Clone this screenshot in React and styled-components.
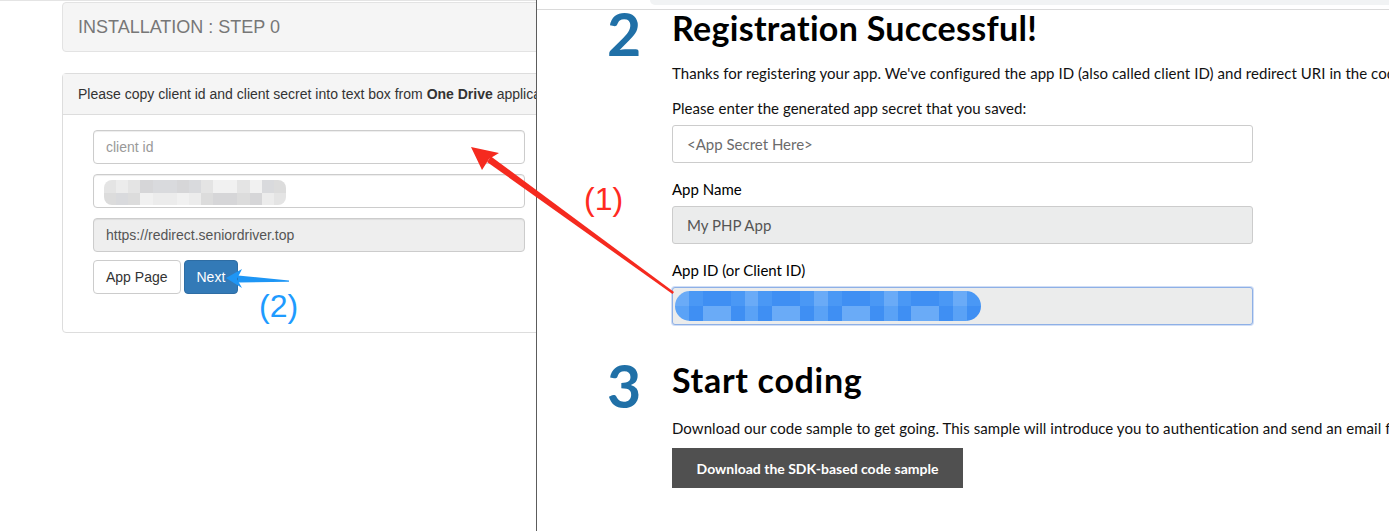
import React from "react";
import styled, { createGlobalStyle } from "styled-components";

const Global = createGlobalStyle`
  html, body { margin: 0; padding: 0; background: #fff; overflow: hidden; }
  * { box-sizing: border-box; }
`;

const Screen = styled.div`
  position: relative;
  width: 1389px;
  height: 531px;
  display: flex;
  overflow: hidden;
  background: #fff;
`;

/* ---------- left page (bootstrap installer) ---------- */
const LeftPane = styled.div`
  flex: none;
  width: 536px;
  height: 100%;
  overflow: hidden;
  border-top: 1px solid #e4e4e4;
  padding-top: 1px;
  font-family: "Liberation Sans", Arial, sans-serif;
  color: #333;
`;

const Container = styled.div`
  width: 900px;
  padding-left: 62px;
`;

const Well = styled.div`
  height: 50px;
  display: flex;
  align-items: center;
  padding: 0 15px;
  background: #f5f5f5;
  border: 1px solid #e3e3e3;
  border-radius: 4px;
  font-size: 18px;
  color: #777;
`;

const Panel = styled.div`
  margin-top: 21px;
  border: 1px solid #ddd;
  border-radius: 4px;
`;

const PanelHeading = styled.div`
  height: 41px;
  display: flex;
  align-items: center;
  padding: 0 15px;
  background: #f5f5f5;
  border-bottom: 1px solid #ddd;
  font-size: 14px;
  white-space: nowrap;
  b { font-weight: 700; }
`;

const PanelBody = styled.div`
  padding: 15px 30px 38px;
`;

const Field = styled.div`
  position: relative;
  width: 432px;
  height: 34px;
  margin-bottom: ${(p) => p.$gap}px;
  display: flex;
  align-items: center;
  padding: 0 12px;
  border: 1px solid #ccc;
  border-radius: 4px;
  background: ${(p) => (p.$disabled ? "#eee" : "#fff")};
  color: ${(p) => (p.$placeholder ? "#999" : "#555")};
  font-size: 14px;
  box-shadow: inset 0 1px 1px rgba(0, 0, 0, 0.075);
`;

const ButtonRow = styled.div`
  display: flex;
  gap: 3px;
`;

const Btn = styled.div`
  height: 34px;
  display: flex;
  align-items: center;
  padding: 0 12px;
  border: 1px solid ${(p) => (p.$primary ? "#2e6da4" : "#ccc")};
  border-radius: 4px;
  background: ${(p) => (p.$primary ? "#337ab7" : "#fff")};
  color: ${(p) => (p.$primary ? "#fff" : "#333")};
  font-size: 14px;
`;

/* ---------- right window (app registration) ---------- */
const RightPane = styled.div`
  flex: 1;
  min-width: 0;
  height: 100%;
  overflow: hidden;
  border-left: 1px solid #5c5c5c;
  background: #fff;
  font-family: "Lato", "Noto Sans", sans-serif;
  color: #000;
`;

const Chrome = styled.div`
  height: 10px;
  display: flex;
  border-bottom: 1px solid #dadada;
`;

const ChromeGap = styled.div`
  width: 113px;
  flex: none;
`;

const ChromeBar = styled.div`
  flex: 1;
  height: 5px;
  background: #f1f3f4;
  border-bottom-left-radius: 8px;
`;

const Content = styled.div`
  padding-left: 72px;
  width: 1400px;
`;

const Section = styled.div`
  display: grid;
  grid-template-columns: 63px 1fr;
  margin-top: ${(p) => p.$top}px;
`;

const StepNum = styled.div`
  font-size: 59px;
  line-height: 47px;
  margin-left: -2px;
  color: #2070a7;
  font-weight: 700;
`;

const Title = styled.h2`
  margin: 0;
  font-size: 34px;
  line-height: 36px;
  font-weight: 700;
  letter-spacing: ${(p) => p.$ls || 0}px;
  white-space: nowrap;
`;

const Para = styled.p`
  margin: ${(p) => p.$top}px 0 0;
  font-size: 15px;
  line-height: 20px;
  letter-spacing: 0.05px;
  white-space: nowrap;
  color: #111;
`;

const Label = styled.div`
  margin-top: 16px;
  font-size: 15px;
  line-height: 20px;
`;

const MsInput = styled.div`
  position: relative;
  margin-top: 7px;
  width: 581px;
  height: 38px;
  display: flex;
  align-items: center;
  padding: 0 14px;
  border: 1px solid ${(p) => (p.$focus ? "#8eb0e6" : "#ccc")};
  border-radius: 3px;
  background: ${(p) => (p.$disabled ? "#ebecec" : "#fff")};
  color: ${(p) => (p.$placeholder ? "#6b6b6b" : "#555")};
  font-size: 15px;
  box-shadow: ${(p) => (p.$focus ? "0 0 0 1px rgba(120,160,230,0.35)" : "none")};
`;

const DarkButton = styled.div`
  margin-top: 10px;
  width: 291px;
  height: 40px;
  display: flex;
  align-items: center;
  justify-content: center;
  background: #505050;
  color: #fff;
  font-size: 14px;
  font-weight: 700;
`;

/* ---------- pixelated blur (redaction) ---------- */
const Redact = styled.div`
  position: absolute;
  left: ${(p) => p.$left}px;
  top: ${(p) => p.$top}px;
  width: ${(p) => p.$w}px;
  height: ${(p) => p.$h}px;
  display: grid;
  grid-template-columns: repeat(${(p) => p.$cols}, 1fr);
  grid-template-rows: repeat(2, 1fr);
  border-radius: ${(p) => p.$radius}px;
  overflow: hidden;
  filter: blur(0.6px);
`;

const Cell = styled.div``;

function Pixelated({ left, top, w, h, palette, cols, radius }) {
  const cells = [];
  for (let r = 0; r < 2; r++) {
    for (let c = 0; c < cols; c++) {
      const idx = (c * 7 + r * 3 + ((c * c) % 5)) % palette.length;
      cells.push(<Cell key={r + "-" + c} style={{ background: palette[idx] }} />);
    }
  }
  return (
    <Redact $left={left} $top={top} $w={w} $h={h} $cols={cols} $radius={radius}>
      {cells}
    </Redact>
  );
}

/* ---------- annotations ---------- */
const Overlay = styled.svg`
  position: absolute;
  left: 0;
  top: 0;
  width: 1389px;
  height: 531px;
  pointer-events: none;
`;

const Note = styled.span`
  position: absolute;
  left: ${(p) => p.$x}px;
  top: ${(p) => p.$y}px;
  font-family: "Liberation Sans", Arial, sans-serif;
  font-size: 32px;
  line-height: 36px;
  color: ${(p) => p.$color};
`;

export default function App() {
  return (
    <>
      <Global />
      <Screen>
        <LeftPane>
          <Container>
            <Well>INSTALLATION : STEP 0</Well>
            <Panel>
              <PanelHeading>
                Please copy client id and client secret into text box from&nbsp;<b>One Drive</b>&nbsp;application
              </PanelHeading>
              <PanelBody>
                <Field $gap={10} $placeholder>client id</Field>
                <Field $gap={10}>
                  <Pixelated
                    left={10}
                    top={5}
                    w={182}
                    h={25}
                    cols={15}
                    radius={8}
                    palette={["#e4e4e4", "#d6d6d8", "#ececec", "#dcdcdc", "#f1f1f1", "#d9dadd"]}
                  />
                </Field>
                <Field $gap={8} $disabled>https://redirect.seniordriver.top</Field>
                <ButtonRow>
                  <Btn>App Page</Btn>
                  <Btn $primary>Next</Btn>
                </ButtonRow>
              </PanelBody>
            </Panel>
          </Container>
        </LeftPane>

        <RightPane>
          <Chrome>
            <ChromeGap />
            <ChromeBar />
          </Chrome>
          <Content>
            <Section $top={0}>
              <StepNum>2</StepNum>
              <div>
                <Title $ls={0.3}>Registration Successful!</Title>
                <Para $top={17}>
                  Thanks for registering your app. We've configured the app ID (also called client ID) and redirect URI in the code sample for you.
                </Para>
                <Para $top={15}>Please enter the generated app secret that you saved:</Para>
                <MsInput $placeholder>&lt;App Secret Here&gt;</MsInput>
                <Label>App Name</Label>
                <MsInput $disabled>My PHP App</MsInput>
                <Label>App ID (or Client ID)</Label>
                <MsInput $disabled $focus>
                  <Pixelated
                    left={2}
                    top={3}
                    w={306}
                    h={30}
                    cols={22}
                    radius={15}
                    palette={["#6aabf7", "#4a98f5", "#82b9f8", "#5aa2f6", "#3f8ff3", "#9cc6f9", "#74b1f7"]}
                  />
                </MsInput>
              </div>
            </Section>
            <Section $top={37}>
              <StepNum>3</StepNum>
              <div>
                <Title $ls={0.7}>Start coding</Title>
                <Para $top={20}>
                  Download our code sample to get going. This sample will introduce you to authentication and send an email from your account.
                </Para>
                <DarkButton>Download the SDK-based code sample</DarkButton>
              </div>
            </Section>
          </Content>
        </RightPane>

        <Overlay viewBox="0 0 1389 531">
          {/* red arrow (1) */}
          <polygon points="491,156.5 487,162 672.5,294 674,292" fill="#f52a1f" />
          <polygon points="471,147 499,153 489,159 482,170" fill="#f52a1f" />
          {/* blue arrow (2) */}
          <polygon points="238,275.5 238,282.5 289,281.8 289,280.4" fill="#1e96f5" />
          <polygon points="226,278 242,269 237,279 242,288" fill="#1e96f5" />
        </Overlay>
        <Note $x={584} $y={181} $color="#ff2a22">(1)</Note>
        <Note $x={259} $y={288} $color="#1e9bff">(2)</Note>
      </Screen>
    </>
  );
}
